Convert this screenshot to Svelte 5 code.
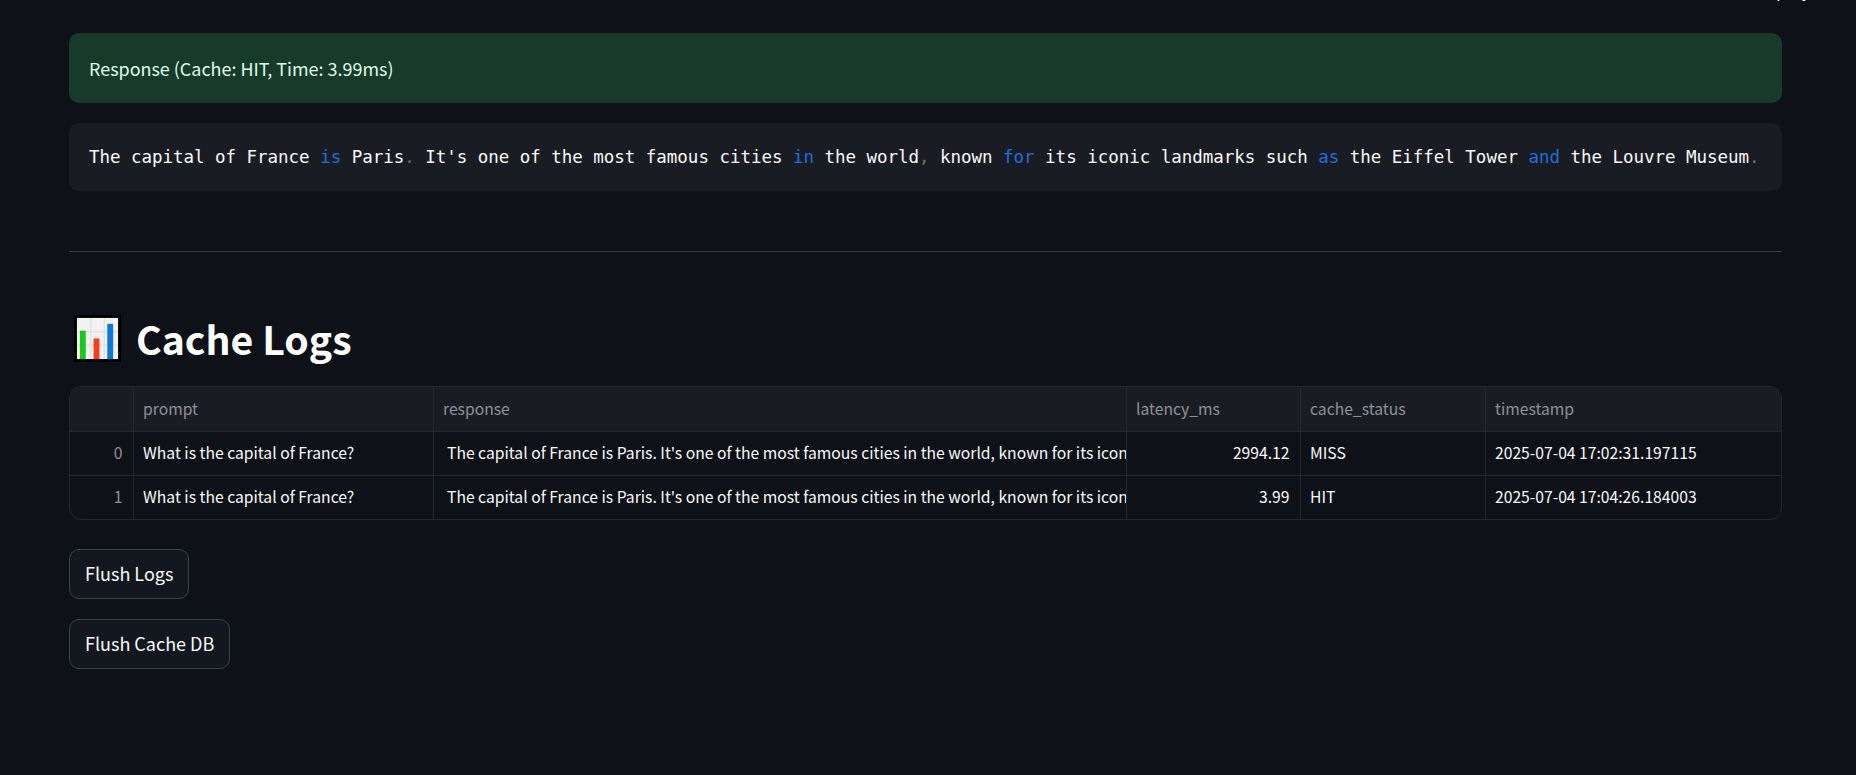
<script>
  const logs = [
    { id: 0, latency: '2994.12', status: 'MISS', time: '2025-07-04 17:02:31.197115' },
    { id: 1, latency: '3.99', status: 'HIT', time: '2025-07-04 17:04:26.184003' }
  ];
  const prompt = 'What is the capital of France?';
  const answer = "The capital of France is Paris. It's one of the most famous cities in the world, known for its iconic landmarks such as the Eiffel Tower and the Louvre Museum.";
</script>

<!-- toolbar is scrolled almost out of view, only descenders show -->
<div class="toolbar">
  <span>Deploy</span>
  <span class="dot"></span>
</div>

<main class="page">
  <div class="alert">Response (Cache: HIT, Time: 3.99ms)</div>

  <pre class="code">The capital of France <b>is</b> Paris<i>.</i> It's one of the most famous cities <b>in</b> the world<i>,</i> known <b>for</b> its iconic landmarks such <b>as</b> the Eiffel Tower <b>and</b> the Louvre Museum<i>.</i></pre>

  <hr />

  <h2>
    <svg class="emoji" viewBox="0 0 48 48" aria-hidden="true">
      <rect width="48" height="48" fill="#000" />
      <rect x="3" y="3" width="42" height="42" fill="#f2f2f2" />
      <path d="M17 3v42M31 3v42M3 17h42M3 31h42" stroke="#e2e2e2" stroke-width="1.5" />
      <rect x="6" y="16" width="6" height="29" fill="#1cc71c" />
      <rect x="20" y="24" width="6" height="21" fill="#f7401b" />
      <rect x="34" y="9" width="6" height="36" fill="#0a78dc" />
    </svg>
    Cache Logs
  </h2>

  <div class="grid">
    <table>
      <colgroup>
        <col class="c-index" /><col class="c-prompt" /><col class="c-response" />
        <col class="c-latency" /><col class="c-status" /><col />
      </colgroup>
      <thead>
        <tr>
          <th></th>
          <th>prompt</th>
          <th>response</th>
          <th>latency_ms</th>
          <th>cache_status</th>
          <th>timestamp</th>
        </tr>
      </thead>
      <tbody>
        {#each logs as row}
          <tr>
            <td class="index">{row.id}</td>
            <td>{prompt}</td>
            <td class="answer">{answer}</td>
            <td class="num">{row.latency}</td>
            <td>{row.status}</td>
            <td>{row.time}</td>
          </tr>
        {/each}
      </tbody>
    </table>
  </div>

  <button>Flush Logs</button>
  <button>Flush Cache DB</button>
</main>

<style>
  :global(body) {
    background: #0e1117;
    color: #fafafa;
    font-family: "Noto Sans CJK SC", "Noto Sans", sans-serif;
  }

  .toolbar {
    position: absolute;
    top: -23px;
    left: 1755px;
    font-size: 17px;
    line-height: 25px;
    overflow: hidden;
  }

  .dot {
    position: absolute;
    left: 86px;
    top: 21px;
    width: 3px;
    height: 4px;
    background: #9a9a9a;
  }

  .page {
    height: 775px;
    box-sizing: border-box;
    padding: 33px 74px 0 69px;
    overflow: hidden;
  }

  .alert {
    height: 70px;
    box-sizing: border-box;
    padding: 0 20px;
    display: flex;
    align-items: center;
    background: #173a2a;
    color: #dffde9;
    border-radius: 10px;
    font-size: 17.95px;
  }

  .code {
    height: 68px;
    box-sizing: border-box;
    margin: 20px 0 0;
    padding: 0 20px;
    line-height: 68px;
    background: #1a1c24;
    border-radius: 10px;
    font-family: "DejaVu Sans Mono", monospace;
    font-size: 17.5px;
    letter-spacing: -0.03px;
    white-space: pre;
    overflow: hidden;
  }

  .code b {
    font-weight: 400;
    color: #1f6fdc;
  }

  .code i {
    font-style: normal;
    color: #6b6f78;
  }

  hr {
    margin: 60px 0 0;
    border: 0;
    border-top: 1px solid #3d3f46;
  }

  h2 {
    display: flex;
    align-items: center;
    gap: 15px;
    margin: 58px 0 0 5px;
    height: 56px;
    font-size: 39.2px;
    font-weight: 600;
    color: #fff;
  }

  .emoji {
    width: 47px;
    height: 47px;
  }

  .grid {
    margin-top: 20px;
    border: 1px solid #262830;
    border-radius: 12px;
    overflow: hidden;
  }

  table {
    width: 100%;
    table-layout: fixed;
    border-collapse: collapse;
    font-size: 15.7px;
  }

  .c-index { width: 63px; }
  .c-prompt { width: 300px; }
  .c-response { width: 693px; }
  .c-latency { width: 174px; }
  .c-status { width: 185px; }

  th, td {
    height: 41px;
    padding: 0 10px 2px 9.5px;
    border-left: 1px solid #262830;
    border-top: 1px solid #262830;
    white-space: nowrap;
    overflow: hidden;
    text-align: left;
    font-weight: 400;
    color: #fafafa;
  }

  th:first-child, td:first-child {
    border-left: 0;
  }

  thead th {
    height: 42px;
    border-top: 0;
    background: #1a1c24;
    color: #8f9196;
  }

  .index {
    text-align: right;
    color: #8f9196;
  }

  .answer {
    padding: 0 0 2px 13.5px;
  }

  .num {
    text-align: right;
  }

  button {
    display: block;
    height: 50px;
    margin: 29px 0 0;
    padding: 0 15px 2px;
    background: #13171f;
    color: #fafafa;
    border: 1px solid #3f4148;
    border-radius: 10px;
    font: inherit;
    font-size: 18px;
  }

  button + button {
    margin-top: 20px;
  }
</style>
